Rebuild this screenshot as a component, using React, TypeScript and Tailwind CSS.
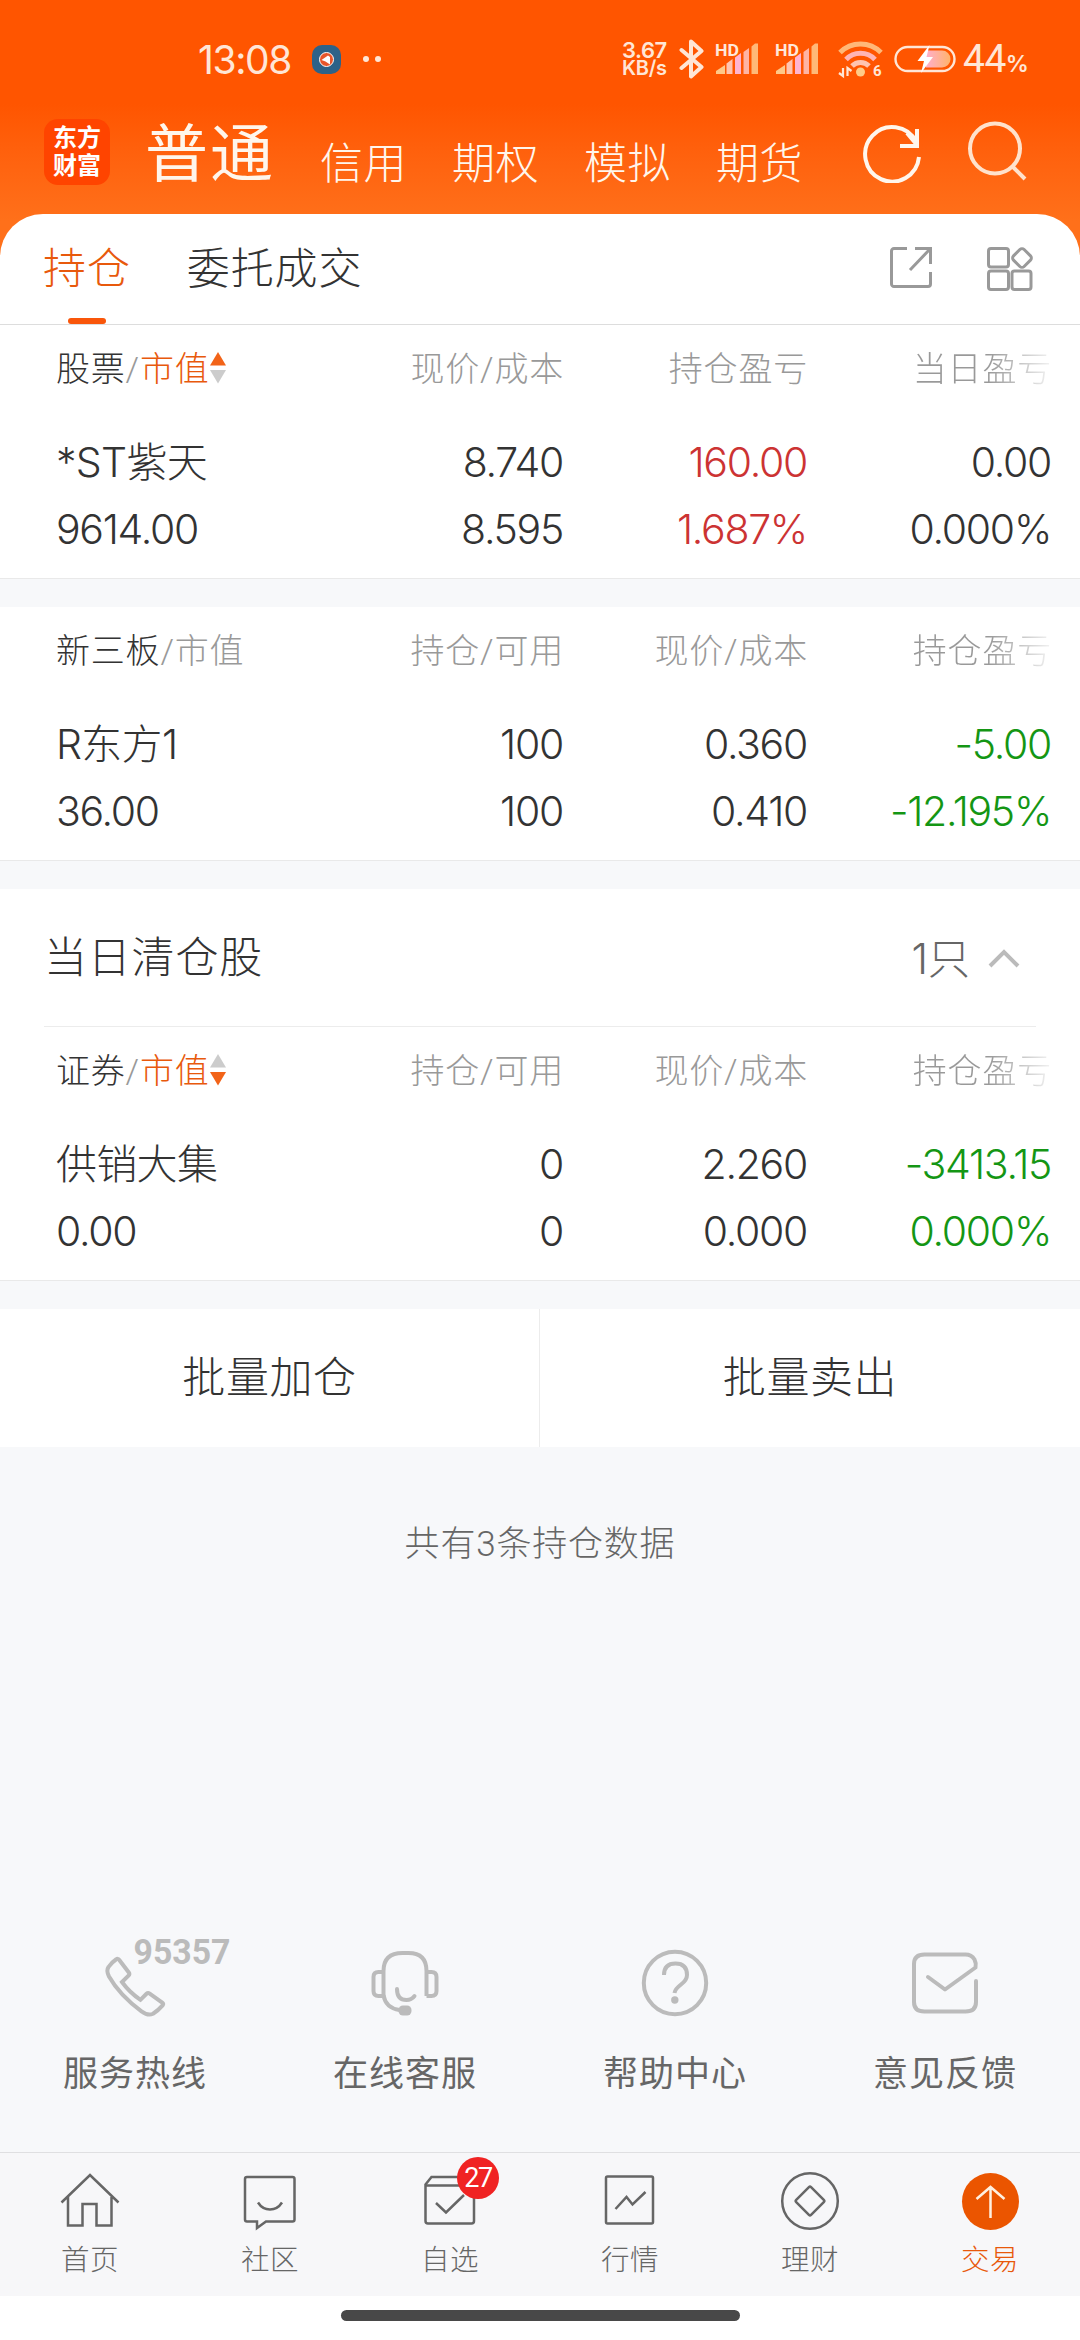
import { useState, type ReactNode } from 'react';
import clsx from 'clsx';

type Tone = 'normal' | 'up' | 'down';

interface Cell {
  top: string;
  bottom: string;
  tone?: Tone;
}

interface Holding {
  name: string;
  marketValue: string;
  cells: Cell[];
}

interface HoldingTableProps {
  title: string;
  sort?: 'asc' | 'desc';
  columns: string[];
  rows: Holding[];
}

const toneClasses: Record<Tone, string> = {
  normal: 'text-[#333333]',
  up: 'text-[#cc3333]',
  down: 'text-[#149614]',
};

const accounts = ['信用', '期权', '模拟', '期货'];

const stockRows: Holding[] = [
  {
    name: '*ST紫天',
    marketValue: '9614.00',
    cells: [
      { top: '8.740', bottom: '8.595' },
      { top: '160.00', bottom: '1.687%', tone: 'up' },
      { top: '0.00', bottom: '0.000%' },
    ],
  },
];

const neeqRows: Holding[] = [
  {
    name: 'R东方1',
    marketValue: '36.00',
    cells: [
      { top: '100', bottom: '100' },
      { top: '0.360', bottom: '0.410' },
      { top: '-5.00', bottom: '-12.195%', tone: 'down' },
    ],
  },
];

const clearedRows: Holding[] = [
  {
    name: '供销大集',
    marketValue: '0.00',
    cells: [
      { top: '0', bottom: '0' },
      { top: '2.260', bottom: '0.000' },
      { top: '-3413.15', bottom: '0.000%', tone: 'down' },
    ],
  },
];

// 信号强度
function Signal() {
  return (
    <svg className="overflow-visible" width="43" height="32" viewBox="0 0 43 32">
      <path d="M0 31v-3l9-6v9z" fill="#ffc888" />
      <path d="M10.500 31V20.500l6-4.500V31z" fill="#ffc4b0" />
      <path d="M19 31V14.500l6-4.500V31z" fill="#ffb4d0" />
      <path d="M27.500 31V9l5.500-4v26z" fill="#ffb4a4" />
      <path d="M35.500 31V3.500L39 .5h3V31z" fill="#ffb878" />
      <text x="-1" y="12.500" fontSize="16" fontWeight="700" fill="#ffe8d8" stroke="#ff5500" strokeWidth="2" paintOrder="stroke" textLength="24" lengthAdjust="spacingAndGlyphs">
        HD
      </text>
    </svg>
  );
}

function StatusBar() {
  return (
    <div className="flex h-[118px] items-center pl-[198px] text-[#ffe6d6]">
      <span className="w-[93px] font-['Inter'] text-[39px] leading-none tracking-[-1.4px]">13:08</span>
      <svg className="ml-[20px]" width="31" height="31" viewBox="0 0 31 31">
        <rect x="1" y="1" width="29" height="29" rx="10" fill="#2d6288" />
        <circle cx="15.500" cy="15.500" r="7" fill="#e8552a" stroke="#fff" strokeWidth="1" />
        <path d="M10.500 16l6.500-4.500 2 1.500v7.500l-4.500-3z" fill="#fff" />
      </svg>
      <div className="ml-[21px] flex gap-[6px]">
        <i className="size-[6px] rounded-full bg-[#ffe6d6]" />
        <i className="size-[6px] rounded-full bg-[#ffe6d6]" />
      </div>
      <div className="ml-[241px] flex w-[48px] flex-col font-['Inter'] leading-[18px] font-semibold whitespace-nowrap">
        <span className="text-[22px] tracking-[-0.5px]">3.67</span>
        <span className="text-[20px] tracking-[-0.3px]">KB/s</span>
      </div>
      <svg className="ml-[9px]" width="25" height="40" viewBox="0 0 25 40" fill="none" stroke="currentColor" strokeWidth="4" strokeLinejoin="round" strokeLinecap="round">
        <path d="M2.500 11l20 17L12 37.500v-35L22.500 12 2.500 29" />
      </svg>
      <div className="ml-[12px] flex gap-[17px]">
        <Signal />
        <Signal />
      </div>
      <svg className="ml-[19px] overflow-visible" width="45" height="38" viewBox="0 0 45 38" fill="none" strokeWidth="5">
        <path d="M2 12.500a29 29 0 0 1 41 0" stroke="#ffb878" />
        <path d="M8 19.500a20 20 0 0 1 29 0" stroke="#ffb4b4" />
        <path d="M14 26a12 12 0 0 1 17 0" stroke="#ffc4b0" />
        <circle cx="22.500" cy="32" r="4.500" fill="#ffcc88" />
        <path d="M5 28v8l-4-3M9.500 36v-8l4 3" stroke="#ffe6d6" strokeWidth="2.200" />
        <text x="35" y="36" fontSize="15" fontWeight="700" fill="#ffe6d6">
          6
        </text>
      </svg>
      <svg className="ml-[11px]" width="62" height="30" viewBox="0 0 62 30" fill="none">
        <defs>
          <linearGradient id="charge" x1="0" x2="1">
            <stop offset="0" stopColor="#ffaecb" />
            <stop offset="1" stopColor="#ffb36a" />
          </linearGradient>
        </defs>
        <rect x="1.500" y="3" width="59" height="24" rx="12" stroke="#ffe6d6" strokeWidth="2.400" />
        <path d="M32 6.500h16a8.500 8.500 0 0 1 0 17H32z" fill="url(#charge)" />
        <path d="M35.500 1L23.500 17h6.500L27 29l12-16h-6.500z" fill="#fff" />
      </svg>
      <span className="ml-[7px] text-[39px] leading-none tracking-[-0.5px]">44</span>
      <span className="mt-[10px] font-['Inter'] text-[23px] leading-none font-semibold tracking-[-1px]">%</span>
    </div>
  );
}

// 顶部账户切换
function AccountBar() {
  return (
    <div className="flex h-[96px] pl-[44px] text-[#fff6ec]">
      <div className="mt-px flex size-[66px] flex-col items-center justify-center rounded-[14px] bg-[#ff4400] text-[24px] leading-[28px] font-bold text-white">
        <span>东方</span>
        <span>财富</span>
      </div>
      <button className="mt-[2px] ml-[35px] h-[70px] w-[131px] text-left text-[63px] leading-[68px] font-normal tracking-[2px] whitespace-nowrap">
        普通
      </button>
      <div className="mt-[17px] ml-[44px] flex gap-[46px]">
        {accounts.map((account) => (
          <button key={account} className="h-[58px] w-[86px] text-left text-[43px] leading-[58px] font-light tracking-[0.5px] whitespace-nowrap">
            {account}
          </button>
        ))}
      </div>
      <svg className="mt-[3px] ml-[60px] shrink-0" width="60" height="62" viewBox="0 0 60 62" fill="none" stroke="currentColor" strokeWidth="4">
        <path d="M54 20.500A27 27.300 0 1 0 57 36" />
        <path d="M55 8v17H38" />
        <path d="M45 12l10 12" />
      </svg>
      <svg className="mt-[3px] ml-[46px] shrink-0" width="60" height="60" viewBox="0 0 60 60" fill="none" stroke="#ffe2cc" strokeWidth="4">
        <circle cx="27" cy="27.500" r="25" />
        <path d="M44 45l13 13" />
      </svg>
    </div>
  );
}

function PageTabs() {
  const [tab, setTab] = useState('持仓');

  return (
    <div className="flex h-[111px] rounded-t-[43px] border-b border-[#dddddd] bg-white pl-[43px]">
      {['持仓', '委托成交'].map((item) => (
        <button
          key={item}
          onClick={() => setTab(item)}
          className={clsx(
            'mr-[56px] flex flex-col items-center text-[43px] font-light tracking-[0.9px] whitespace-nowrap',
            tab === item ? 'text-[#e8590c]' : 'text-[#333333]'
          )}
        >
          <span className="mt-[25px] h-[79px] leading-[60px]">{item}</span>
          {tab === item && <i className="h-[6px] w-[38px] rounded-full bg-[#f9560a]" />}
        </button>
      ))}
      <svg className="mt-[32px] mr-[53px] ml-auto" width="44" height="44" viewBox="0 0 44 44" fill="none" stroke="#999999" strokeWidth="3">
        <path d="M18 2.500H5A2.500 2.500 0 0 0 2.500 5v33A2.500 2.500 0 0 0 5 40.500h34a2.500 2.500 0 0 0 2.500-2.500V26" />
        <path d="M26 2.500h15.500V18M41.500 2.500L21 24" />
      </svg>
      <svg className="mt-[32px] mr-[46px]" width="48" height="46" viewBox="0 0 48 46" fill="none" stroke="#999999" strokeWidth="3">
        <rect x="2.500" y="2.500" width="20" height="18.500" rx="2.500" />
        <rect x="2.500" y="25" width="20" height="18.500" rx="2.500" />
        <rect x="26" y="25" width="19" height="18.500" rx="2.500" />
        <rect x="28.500" y="4.500" width="15" height="15" rx="3" transform="rotate(45 36 12)" />
      </svg>
    </div>
  );
}

// 排序箭头
function SortMark({ sort }: { sort: 'asc' | 'desc' }) {
  return (
    <svg className="-mt-[4px] -ml-px" width="18" height="34" viewBox="0 0 18 34">
      <path d="M9 2l8 13.500H1z" fill={sort === 'asc' ? '#f26318' : '#cccccc'} />
      <path d="M9 33.500L1 20h16z" fill={sort === 'desc' ? '#f26318' : '#cccccc'} />
    </svg>
  );
}

function HoldingTable({ title, sort, columns, rows }: HoldingTableProps) {
  return (
    <div className="h-[254px] border-b border-[#e9e9e9] bg-white pt-[19px] pr-[28px] pl-[56px] font-light">
      <div className="grid h-[50px] grid-cols-[264px_244px_244px_244px] text-[34px] leading-[50px] tracking-[0.8px] text-[#999999]">
        <div className="flex items-center whitespace-nowrap">
          <span className="text-[#333333]">{title}</span>/
          <span className={clsx(sort && 'text-[#e8590c]')}>市值</span>
          {sort && <SortMark sort={sort} />}
        </div>
        {columns.map((column, index) => (
          <div
            key={column}
            className={clsx(
              'text-right whitespace-nowrap',
              index === columns.length - 1 &&
                'bg-linear-to-r from-[#999999] from-[74%] to-[#f4f4f4] to-[100%] bg-clip-text text-transparent'
            )}
          >
            {column}
          </div>
        ))}
      </div>
      {rows.map((row) => (
        <div
          key={row.name}
          className="mt-[35px] grid grid-cols-[263px_244px_244px_244px] font-['Inter','Noto_Sans_CJK_SC',sans-serif] text-[41px] leading-[67px] tracking-[-1.3px]"
        >
          <div className="flex flex-col whitespace-nowrap text-[#333333]">
            <span className="h-[67px] tracking-[-0.7px]">{row.name}</span>
            <span className="h-[67px]">{row.marketValue}</span>
          </div>
          {row.cells.map((cell, index) => (
            <div key={index} className={clsx('flex flex-col text-right', toneClasses[cell.tone ?? 'normal'])}>
              <span className="h-[67px]">{cell.top}</span>
              <span className="h-[67px]">{cell.bottom}</span>
            </div>
          ))}
        </div>
      ))}
    </div>
  );
}

// 客服入口
const services: { label: string; icon: ReactNode }[] = [
  {
    label: '服务热线',
    icon: (
      <>
        <path d="M16.500 10.500q1.800-1.500 3.300.5l9.500 12.500q1.200 1.700-.3 3.200L22.500 33q7.500 10.500 18.500 17.800l6-6q1.500-1.400 3.200-.2l12.500 9q1.600 1.300.4 2.800-4.300 5-9.600 8.400-5 2.300-11.500-2.500Q20 46 9.500 27.500 6.500 21.500 9 18q3-4.500 7.500-7.500z" />
        <text x="34" y="15" fontSize="35" fontWeight="700" fill="#bbbbbb" stroke="none" textLength="97" lengthAdjust="spacingAndGlyphs">
          95357
        </text>
      </>
    ),
  },
  {
    label: '在线客服',
    icon: (
      <>
        <path d="M14 47V22Q14 4 33 4h6Q57 4 57 22v25" />
        <path d="M13 23H9q-5 0-5 5v14q0 5 5 5h4M58 23h4q5 0 5 5v14q0 5-5 5h-5M14 46q2 13 16 15" />
        <path d="M27.500 40q0 11 9.500 11 5 0 8-4" strokeLinecap="round" />
        <rect x="29" y="56.500" width="13" height="10" rx="4.500" fill="#bbbbbb" stroke="none" />
      </>
    ),
  },
  {
    label: '帮助中心',
    icon: (
      <>
        <circle cx="35.500" cy="34" r="31.200" />
        <path d="M24.500 26q0-11.500 11.500-11.500T47.500 26q0 5-6 9.500T35 44" />
        <circle cx="35.300" cy="51" r="3.700" fill="#bbbbbb" stroke="none" />
      </>
    ),
  },
  {
    label: '意见反馈',
    icon: (
      <path
        d="M18.500 28L35.500 40.500 66 18.500q1-4-1-8-3-5-9-5H15Q4.500 5.500 4.500 15v38Q4.500 62.500 15 62.500h41Q66.500 62.500 66.500 53V32"
        strokeLinejoin="round"
        strokeLinecap="round"
      />
    ),
  },
];

function ServiceRow() {
  return (
    <div className="mt-auto grid h-[203px] grid-cols-4">
      {services.map((service) => (
        <button key={service.label} className="flex flex-col items-center">
          <svg className="overflow-visible" width="70" height="70" viewBox="0.5 0 70 70" fill="none" stroke="#bbbbbb" strokeWidth="4">
            {service.icon}
          </svg>
          <span className="mt-[31px] text-[35px] leading-[50px] tracking-[1px] text-[#666666]">{service.label}</span>
        </button>
      ))}
    </div>
  );
}

// 底部导航
const navItems: { label: string; icon: ReactNode; badge?: number; active?: boolean }[] = [
  {
    label: '首页',
    icon: <path d="M1.500 32.500L30 5l28.500 27.500M8 27v28.500h14.500V34h14v21.500h15V27" />,
  },
  {
    label: '社区',
    icon: (
      <>
        <path d="M7 7h45.500q2 0 2 2v40.500q0 2-2 2H26l-9 6.500v-6.500H7q-2 0-2-2V9q0-2 2-2z" />
        <path d="M18 32.500q4.500 7 12 7t12-7" />
      </>
    ),
  },
  {
    label: '自选',
    badge: 27,
    icon: (
      <>
        <path d="M5.500 14.500L11.500 7H44L54 15v36q0 2.500-2.500 2.500H8q-2.500 0-2.500-2.500z" />
        <path d="M5.500 15.500H54M16 33l10 9.500L44 25" />
      </>
    ),
  },
  {
    label: '行情',
    icon: (
      <>
        <rect x="6" y="6.500" width="47" height="47" rx="1.500" />
        <path d="M15.500 39l11-12 6 7.500L45.500 22" />
      </>
    ),
  },
  {
    label: '理财',
    icon: (
      <>
        <circle cx="30" cy="31" r="27.800" />
        <rect x="19.500" y="20.500" width="21" height="21" rx="1.500" transform="rotate(45 30 31)" />
      </>
    ),
  },
  {
    label: '交易',
    active: true,
    icon: (
      <>
        <circle cx="30.500" cy="31.500" r="28.500" fill="#eb5500" stroke="none" />
        <path d="M30.500 48V17M16.500 29l14-12 14 12" stroke="#fff0e0" />
      </>
    ),
  },
];

function BottomNav() {
  return (
    <div className="grid h-[144px] shrink-0 grid-cols-6 border-t border-[#dfdfe1] bg-[#f7f7f9]">
      {navItems.map((item) => (
        <button key={item.label} className="relative flex flex-col items-center pt-[17px]">
          <svg width="60" height="62" viewBox="0 0 60 62" fill="none" stroke="#666666" strokeWidth="2.500">
            {item.icon}
          </svg>
          <span
            className={clsx(
              'mt-[9px] text-[28.500px] leading-[40px] font-light tracking-[0.5px]',
              item.active ? 'text-[#e8590c]' : 'text-[#666666]'
            )}
          >
            {item.label}
          </span>
          {item.badge && (
            <span className="absolute top-[4px] left-[97px] flex size-[42px] items-center justify-center rounded-full bg-[#f02323] text-[27px] leading-none tracking-[-1.5px] text-white">
              {item.badge}
            </span>
          )}
        </button>
      ))}
    </div>
  );
}

export default function App() {
  return (
    <div className="flex h-[2340px] w-[1080px] flex-col overflow-hidden bg-[#f7f8fa] font-['Roboto','Noto_Sans_CJK_SC',sans-serif]">
      <div className="bg-linear-to-b from-[#ff5500] from-[32%] to-[#ff701a] to-[68%]">
        <StatusBar />
        <AccountBar />
        <PageTabs />
      </div>

      <HoldingTable title="股票" sort="asc" columns={['现价/成本', '持仓盈亏', '当日盈亏']} rows={stockRows} />
      <div className="mt-[28px]">
        <HoldingTable title="新三板" columns={['持仓/可用', '现价/成本', '持仓盈亏']} rows={neeqRows} />
      </div>

      {/* 当日清仓 */}
      <div className="mt-[28px] bg-white">
        <div className="mx-[44px] flex h-[138px] items-center border-b border-[#ececec] pr-[15px] font-light">
          <span className="mt-[2px] text-[43px] tracking-[0.8px] text-[#333333]">当日清仓股</span>
          <span className="mt-[2px] ml-auto font-['Inter','Noto_Sans_CJK_SC',sans-serif] text-[42px] text-[#666666]">1只</span>
          <svg className="ml-[17px]" width="34" height="20" viewBox="0 0 34 20" fill="none" stroke="#bbbbbb" strokeWidth="4">
            <path d="M3 18L17 4l14 14" />
          </svg>
        </div>
        <HoldingTable title="证券" sort="desc" columns={['持仓/可用', '现价/成本', '持仓盈亏']} rows={clearedRows} />
      </div>

      <div className="mt-[28px] grid h-[138px] grid-cols-2 bg-white text-[43px] font-light tracking-[0.6px] text-[#333333]">
        <button className="border-r border-[#ececec]">批量加仓</button>
        <button>批量卖出</button>
      </div>

      <p className="mt-[72px] text-center text-[35px] leading-[52px] font-light tracking-[0.8px] text-[#666666]">共有3条持仓数据</p>

      <ServiceRow />
      <BottomNav />
      <div className="flex h-[44px] shrink-0 justify-center bg-white pt-[14px]">
        <i className="h-[11px] w-[399px] rounded-full bg-[#484848]" />
      </div>
    </div>
  );
}
